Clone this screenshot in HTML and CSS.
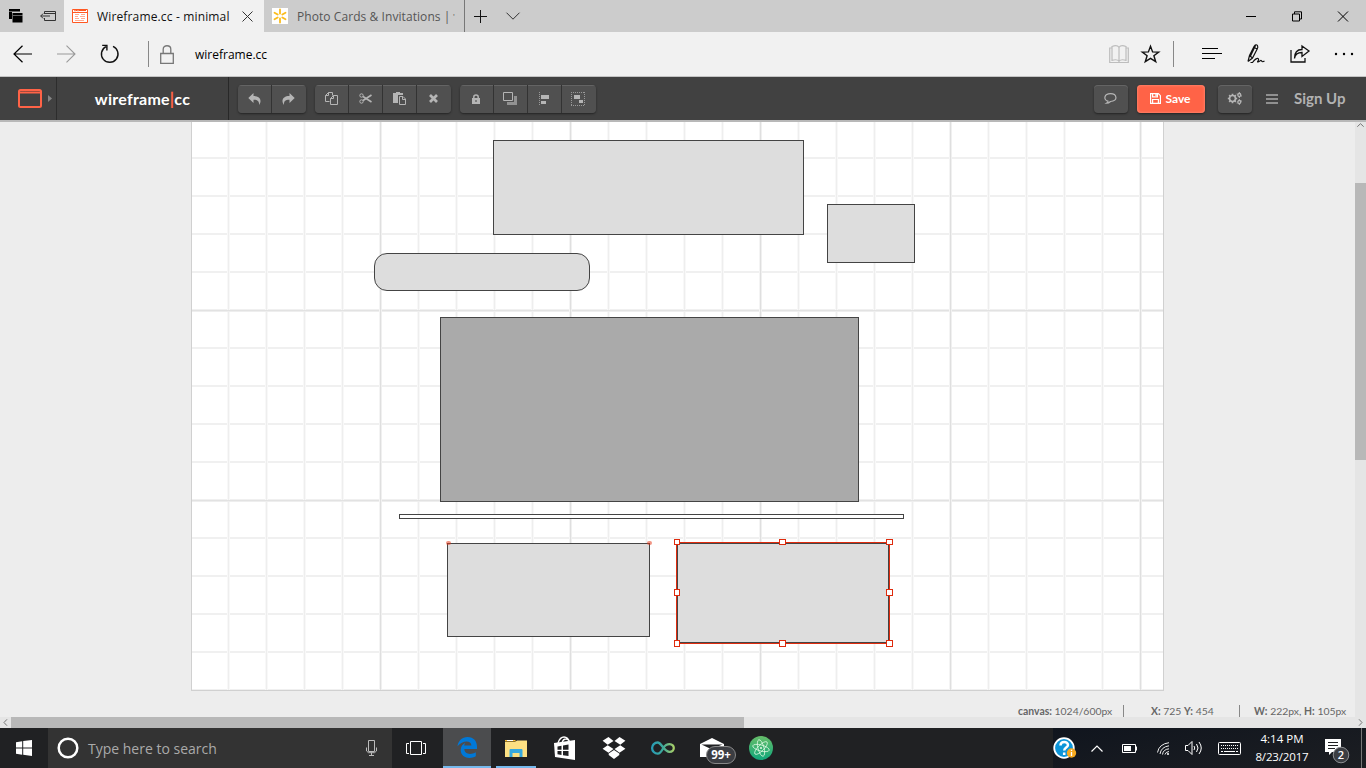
FILE: index.html
```html
<!DOCTYPE html>
<html lang="en">
<head>
<meta charset="utf-8">
<title>Wireframe.cc - minimal</title>
<link rel="stylesheet" href="styles.css">
</head>
<body>
<header class="tabs">
  <div class="tab-tools">
    <svg width="14" height="14" viewBox="0 0 14 14"><path d="M0 0h11v3H3v7H0z"/><path d="M3.5 4h10v9.500h-10z"/><path d="M0 2.500h11M4 6.500h10" stroke="#aaa" stroke-width=".6"/></svg>
    <svg width="16" height="12" viewBox="0 0 16 12" fill="none" stroke="#333"><path d="M4.500 4V1.500h11v9h-11V8M4.500 3.500h11M.7 6H10M3.200 3.500.7 6l2.500 2.500"/></svg>
  </div>
  <div class="tab active">
    <svg width="16" height="14" viewBox="0 0 16 14" fill="none" stroke="#ff5722"><path fill="#fff" d="M.5.500h15v13H.500z"/><path d="M1 3.500h14M2 1.500h12" /><path d="M2 2h2M5 2h2" stroke="#ffc4ad"/><path d="M3 5.500h4M9 5.500h4M3 7.500h3M8 7.500h5M3 9.500h4M9 9.500h4M3 11.500h9" stroke="#ffab91"/></svg>
    <span class="tab-name t-one">Wireframe.cc - minimal</span>
    <svg class="tab-x" width="11" height="11" viewBox="0 0 11 11" stroke="#333"><path d="m.5.500 10 10m0-10-10 10"/></svg>
  </div>
  <div class="tab idle">
    <svg width="16" height="16" viewBox="0 0 16 16"><path fill="#fff" d="M0 0h16v16H0z"/><path d="M8 1.500v4M8 10.500v4M2.500 4.700 5.700 6.600M10.300 9.400l3.200 1.900M2.500 11.300l3.200-1.900M10.300 6.600l3.200-1.900" stroke="#fbbc1c" stroke-width="1.800" stroke-linecap="round"/></svg>
    <span class="tab-name t-two">Photo Cards &amp; Invitations |</span><span class="cut">'</span>
  </div>
  <svg class="plus" width="13" height="13" viewBox="0 0 13 13" stroke="#111"><path d="M6.500 0v13M0 6.500h13"/></svg>
  <svg class="chev" width="14" height="8" viewBox="0 0 14 8" fill="none" stroke="#333"><path d="m.5.700 6.500 6.500L13.500.700"/></svg>
  <div class="win">
    <svg width="10" height="11" viewBox="0 0 10 11" stroke="#000"><path d="M0 5.500h10"/></svg>
    <svg width="10" height="11" viewBox="0 0 10 11" fill="none" stroke="#000"><path d="M.500 3h7v7h-7zM2.500 3V.800h7V8h-2"/></svg>
    <svg width="10" height="11" viewBox="0 0 10 11" stroke="#000"><path d="m0 .500 10 10m0-10-10 10"/></svg>
  </div>
</header>

<nav class="address">
  <svg class="back" width="20" height="18" viewBox="0 0 20 18" fill="none" stroke="#000" stroke-width="1.200"><path d="M19 9H1M9.500.700 1 9l8.500 8.300"/></svg>
  <svg class="fwd" width="20" height="18" viewBox="0 0 20 18" fill="none" stroke="#999" stroke-width="1.100"><path d="M1 9h18M10.500.700 19 9l-8.500 8.300"/></svg>
  <svg class="reload" width="20" height="20" viewBox="0 0 20 20" fill="none" stroke="#111" stroke-width="1.400"><path d="M13 2.400A8.300 8.300 0 1 1 6 2.600M2.200 1.400h4.700v5"/></svg>
  <i class="bar"></i>
  <svg class="lock" width="14" height="19" viewBox="0 0 14 19" fill="none" stroke="#777" stroke-width="1.300"><path d="M.7 8.500h12.600v9.800H.7zM3.200 8.500V4.200c0-4.600 7.600-4.600 7.600 0v4.300"/></svg>
  <span class="url">wireframe.cc</span>
  <div class="edge-tools">
    <svg width="20" height="19" viewBox="0 0 20 19" fill="none" stroke="#bdbdbd" stroke-width="1.200"><path d="M3 1.500q5-2 7 .8 2-2.800 7-.8v13.800q-5-1.400-7 .8-2-2.200-7-.8zM10 2.300v15M3 3H.7v14.500h18.600V3H17"/></svg>
    <svg class="star" width="19" height="18" viewBox="0 0 19 18" fill="none" stroke="#111" stroke-width="1.400"><path d="m9.500 1.200 2.100 5.700 6.100.2-4.800 3.700 1.800 5.900-5.200-3.400-5.200 3.400 1.800-5.900-4.800-3.700 6.100-.2z"/></svg>
    <i class="bar"></i>
    <svg class="hub" width="20" height="12" viewBox="0 0 20 12" stroke="#000" stroke-width="1.100"><path d="M0 .5h16M0 5.500h20M0 10.500h13"/></svg>
    <svg class="pen" width="18" height="20" viewBox="0 0 18 20" fill="none" stroke="#111" stroke-width="1.200"><path d="M1 17.500 2.500 11.500 7 2.500q2-3 3.500-.8.800 1.300-.3 3.300L5.500 14 1 17.500M8.500 1.500 3.500 12M6.500 3l3.500 2M2.500 11.500l3 2.500M3.500 18.500h2c2.500-3.500 5-5 6-3.500s-2 3-.5 3 2.500-2.500 3.500-1.200.8 1.500 3 .2"/></svg>
    <svg class="share" width="20" height="18" viewBox="0 0 20 18" fill="none" stroke="#111" stroke-width="1.300"><path d="M1 5v12h14v-4M4.500 13.500c.5-4 3-6 7.500-6v4L19 6l-7-5v3.500c-5 0-7.500 3-7.500 9z"/></svg>
    <svg class="dots" width="20" height="4" viewBox="0 0 20 4"><circle cx="2" cy="2" r="1.200"/><circle cx="10" cy="2" r="1.200"/><circle cx="18" cy="2" r="1.200"/></svg>
  </div>
</nav>

<div class="toolbar">
  <div class="menu-cell">
    <svg width="24" height="19" viewBox="0 0 24 19" fill="none" stroke="#ff6347" stroke-width="2"><rect x="1" y="1" width="22" height="17" rx="1.500"/><path d="M1 3.500h22" stroke-width="2"/><path d="M3 2.500h1.500M5.500 2.500H7M8 2.500h13" stroke="#a34a3c" stroke-width="1"/></svg>
    <svg class="tri" width="4" height="7" viewBox="0 0 4 7"><path d="m0 0 4 3.500L0 7z" fill="#858585"/></svg>
  </div>
  <div class="brand">wireframe<b>|</b>cc</div>
  <div class="group g-history">
    <button><svg width="13" height="12" viewBox="0 0 13 12"><path d="M5.500 0v3C10 3 12.500 5 12.500 8c0 1.500-.5 2.700-1.500 4 .3-3.500-1-5.200-5.500-5.200V10L.3 5z"/></svg></button>
    <button><svg width="13" height="12" viewBox="0 0 13 12"><path d="M7.500 0v3C3 3 .5 5 .5 8c0 1.500.5 2.700 1.500 4-.3-3.500 1-5.200 5.500-5.200V10l5.200-5z"/></svg></button>
  </div>
  <div class="group">
    <button><svg class="line" width="13" height="13" viewBox="0 0 13 13"><path d="M4.500 9.500h-4v-6l3-3h4v3M.5 3.500h3v-3M5.500 12.500h7v-9h-4l-3 3zM5.500 6.500h3v-3"/></svg></button>
    <button><svg class="line" width="13" height="11" viewBox="0 0 13 11"><circle cx="2.500" cy="2.500" r="1.700"/><circle cx="2.500" cy="8.500" r="1.700"/><path d="m4 3.500 8.500 5.500M4 7.500 12.500 2" stroke-width="1.600"/></svg></button>
    <button><svg width="13" height="13" viewBox="0 0 13 13"><path d="M0 1h3V0h4v1h3v2H5v8H0z"/><path d="M6.500 4.500h3.500l2.500 2.500v5.500h-6zM9.500 4.500v3h3" fill="#4e4e4e" stroke="#b5b5b5"/></svg></button>
    <button><svg width="9" height="9" viewBox="0 0 9 9" stroke="#b5b5b5" stroke-width="2.700"><path d="m1 1 7 7m0-7-7 7"/></svg></button>
  </div>
  <div class="group">
    <button><svg width="8" height="10" viewBox="0 0 8 10"><path d="M0 4h8v6H0z"/><path d="M1.800 5V3c0-2.700 4.400-2.700 4.400 0v2" fill="none" stroke="#b5b5b5" stroke-width="1.500"/><path d="M3.500 6h1v2h-1z" fill="#444"/></svg></button>
    <button><svg width="14" height="13" viewBox="0 0 14 13"><path d="M11 4h3v9H4v-3h7z" fill="#929292"/><path d="M.5.500h9v8h-9z" fill="none" stroke="#b5b5b5"/></svg></button>
    <button><svg width="11" height="14" viewBox="0 0 11 14"><path d="M.5 0v14" stroke="#999" stroke-dasharray="1 1"/><path d="M2 3h8v4H2zM2 9h5v3H2z"/></svg></button>
    <button><svg width="14" height="14" viewBox="0 0 14 14"><path d="M0 .5h14M0 13.500h14M.5 0v14M13.500 0v14" fill="none" stroke="#999" stroke-dasharray="1 1"/><path d="M3 3h6v4H3zM8 8h4v3H8z"/></svg></button>
  </div>
  <div class="right-tools">
    <button class="solo"><svg class="line" width="13" height="11" viewBox="0 0 13 11"><path d="M4 8.200C-1 7 0 .7 6.500.7s8 7.500 0 7.800Q4.800 10.200 2.500 10.200 4 9.300 4 8.200z" stroke-width="1.200"/></svg></button>
    <button class="save"><svg width="11" height="11" viewBox="0 0 11 11" fill="none" stroke="#fff" stroke-width="1.200"><path d="M.6.600h7.700l2.100 2.100v7.700H.6zM2.600.6v3.200h4.800V.6M2.600 10V6.500h5.800V10M6 1v2"/></svg>Save</button>
    <button class="solo cog"><svg class="line" width="14" height="13" viewBox="0 0 14 13"><circle cx="4.500" cy="6.500" r="3" stroke-width="1.700"/><path d="M4.500 1.700v1.500M4.500 9.800v1.500M-.2 6.500h1.500M7.700 6.500h1.500M1.200 3.200l1 1M6.800 8.800l1 1M7.800 3.200l-1 1M2.200 8.800l-1 1" stroke-width="1.700"/><circle cx="11.300" cy="3" r="1.500" stroke-width="1.300"/><circle cx="11.300" cy="10" r="1.500" stroke-width="1.300"/><path d="M11.300 0v1M11.300 5v1M11.300 7v1M11.300 12v1M8.700 2h.8M13 4h.8M8.700 11h.8M13 9h.8"/></svg></button>
    <svg class="burger" width="12" height="10" viewBox="0 0 12 10" stroke="#aaa" stroke-width="1.500"><path d="M0 1h12M0 5h12M0 9h12"/></svg>
    <span class="signup">Sign Up</span>
  </div>
</div>

<main class="work">
  <div class="stage">
    <div class="paper"></div>
    <div class="shape hero"></div>
    <div class="shape side"></div>
    <div class="shape pill"></div>
    <div class="shape dark"></div>
    <div class="shape rule"></div>
    <div class="shape card"><i></i><i></i></div>
    <div class="shape picked"><i class="h nw"></i><i class="h n"></i><i class="h ne"></i><i class="h w"></i><i class="h e"></i><i class="h sw"></i><i class="h s"></i><i class="h se"></i></div>
    <div class="status"><span class="s-canvas"><b>canvas:</b> 1024/600px</span><i></i><span class="s-pos"><b>X:</b> 725 <b>Y:</b> 454</span><i></i><span class="s-size"><b>W:</b> 222px, <b>H:</b> 105px</span></div>
  </div>
  <div class="vscroll"><svg width="7" height="4" viewBox="0 0 7 4" fill="none" stroke="#777"><path d="m.3 3.700 3.200-3 3.200 3"/></svg><i></i></div>
</main>
<div class="hscroll"><svg width="5" height="7" viewBox="0 0 5 7" fill="none" stroke="#777"><path d="M4 .3 1 3.500l3 3.200"/></svg><i></i><svg class="hr" width="5" height="7" viewBox="0 0 5 7" fill="none" stroke="#777"><path d="m1 .3 3 3.200-3 3.200"/></svg></div>

<footer class="taskbar">
  <div class="start"><svg width="16" height="16" viewBox="0 0 16 16" fill="#fff"><path d="M0 2.200 6.200 1.300v6.200H0zM7.200 1.100 16 0v7.500H7.200zM0 8.500h6.200v6.200L0 13.800zM7.200 8.500H16V16l-8.800-1.200z"/></svg></div>
  <div class="search">
    <svg width="22" height="22" viewBox="0 0 22 22" fill="none" stroke="#fff" stroke-width="2.500"><circle cx="11" cy="11" r="9.300"/></svg>
    <span>Type here to search</span>
    <svg class="mic" width="11" height="16" viewBox="0 0 11 16" fill="none" stroke="#bbb"><path d="M2.500.500h6v11h-6zM.500 7.500v3.500l2 1.700h6l2-1.700V7.500M5.500 12.500v3M3 15.500h5"/></svg>
  </div>
  <div class="app view"><svg width="20" height="15" viewBox="0 0 20 15" fill="none" stroke="#fff"><path d="M4.500.500h11v13h-11zM3 2.500H.500v10H3M17 2.500h2.500v10H17"/></svg></div>
  <div class="app edge"><svg width="21" height="21" viewBox="0 0 21 21"><path fill="#0078d7" d="M.5 9.200C1.300 3.800 5 0 10.500 0 16.700 0 20 4.300 20 9.800V12H7.300c.2 5.600 7 6 11.500 3.200v4.100C12.500 22.800 3.700 20.700 3.700 13c0-3.400 1.900-6 4.800-7.300C7.600 6.800 7.300 7.700 7.200 8.600h7.200C14.300 2.500 5 3.500.5 9.200z"/></svg></div>
  <div class="app files"><svg width="22" height="19" viewBox="0 0 22 19"><path fill="#f5bd32" d="M0 1h10l1.500 1.500H0z"/><path fill="#fce083" d="M0 3h10l2-1.500h10V18H0z"/><path fill="#fff" d="M2 1h6v1H2z"/><path fill="#36a9df" d="M4.500 18v-7q0-1 1-1h11q1 0 1 1v7h-3v-4h-7v4z"/></svg></div>
  <div class="app"><svg width="22" height="24" viewBox="0 0 22 24"><path d="M4 7q2-6 6-6t6 6M8 7q1-4 4-4t4 4" fill="none" stroke="#fff" stroke-width="1.300"/><path fill="#fff" d="M0 7l21-3v20L1 21z"/><path fill="#202123" d="m3.500 10.500 4-.7v4h-4zM9 9.500l5.500-1v5.200H9zM3.500 15h4v4l-4-.7zM9 15h5.500v5L9 19.200z"/></svg></div>
  <div class="app"><svg width="24" height="22" viewBox="0 0 24 22" fill="#fff"><path d="m6.500 0 5 4-5.800 3.700L.6 3.800zM17.500 0l-5 4 5.800 3.700 5.100-3.900zM5.700 8.200l5.800 3.900-5 3.600-5.900-3.900zM18.300 8.200l-5.800 3.900 5 3.600 5.900-3.900zM6.700 16.600l5.300-3.700 5.300 3.700v1.500L12 22l-5.300-3.900z"/></svg></div>
  <div class="app"><svg width="24" height="14" viewBox="0 0 24 14" fill="none" stroke-width="2.300"><defs><linearGradient id="inf"><stop stop-color="#299db5"/><stop offset=".5" stop-color="#3da99a"/><stop offset="1" stop-color="#a8cf68"/></linearGradient></defs><path stroke="url(#inf)" d="M12.300 7C10.500 10.500 9 12.700 6.700 12.700a5.600 5.600 0 0 1 0-11.200C10.500 1.500 13 10.800 18.500 10.800c5.700 0 5.700-7.600 0-7.600-3 0-4.700 1.500-6.200 3.800"/></svg></div>
  <div class="app mail"><svg width="24" height="20" viewBox="0 0 24 20"><path fill="#fff" d="M0 6 12 0l12 6v13H0z"/><path fill="#202123" d="m1.500 6.500 21 0L14 10l-3 1z"/></svg><span>99+</span></div>
  <div class="app"><svg width="24" height="24" viewBox="0 0 24 24" fill="none"><defs><linearGradient id="atom" x2="0" y2="1"><stop stop-color="#66bd69"/><stop offset="1" stop-color="#11a77b"/></linearGradient></defs><circle cx="12" cy="12" r="12" fill="url(#atom)"/><g stroke="#d9f7df" stroke-width=".8"><ellipse cx="12" cy="12" rx="8.500" ry="3" transform="rotate(15 12 12)"/><ellipse cx="12" cy="12" rx="8.500" ry="3" transform="rotate(75 12 12)"/><ellipse cx="12" cy="12" rx="8.500" ry="3" transform="rotate(135 12 12)"/></g><circle cx="12" cy="12" r="1.100" fill="#d9f7df"/></svg></div>
  <div class="tray">
    <svg width="24" height="22" viewBox="0 0 24 22"><circle cx="11" cy="11" r="9.800" fill="#0d95d8" stroke="#fff" stroke-width="1.800"/><path d="M7.500 8.500c0-5 7.500-4.500 7.500-.5 0 2.500-3.800 2.700-3.800 5.500M11.200 15.500V18" fill="none" stroke="#fff" stroke-width="2.500"/><circle cx="18.500" cy="16" r="4.700" fill="#f7aa20"/><path d="M18.500 15v4M18.500 12.700v1.300" stroke="#fff" stroke-width="1.300"/></svg>
    <svg class="up" width="12" height="7" viewBox="0 0 12 7" fill="none" stroke="#fff" stroke-width="1.200"><path d="m.5 6.500 5.500-5.500 5.500 5.500"/></svg>
    <svg class="bat" width="16" height="9" viewBox="0 0 16 9"><path d="M.5.500h13v8H.500zM14.500 2.500v4" fill="none" stroke="#fff"/><path fill="#fff" d="M2 2h7v5H2z"/></svg>
    <svg class="wifi" width="13" height="13" viewBox="0 0 13 13" fill="none" stroke="#eee"><path d="M.5 10.500Q2 2 12 .7M3 12Q4 5 12 3.800M5.500 12.500Q6 7.500 12 6.800M8 12.500Q8.500 10 12 9.500"/><circle cx="11" cy="12" r="1" fill="#fff" stroke="none"/></svg>
    <svg class="vol" width="17" height="14" viewBox="0 0 17 14" fill="none" stroke="#fff"><path d="M.5 4.500H3l4-4v13l-4-4H.5zM9 5q1.500 2 0 4M11.500 3q3 4 0 8M14 1q4.500 6 0 12"/></svg>
    <svg class="kbd" width="23" height="13" viewBox="0 0 23 13" fill="none" stroke="#fff"><rect x=".5" y=".5" width="22" height="12" rx="1"/><path d="M3 3.500h17M3 6.500h17" stroke-dasharray="1 1"/><path d="M3 9.500h2M6 9.500h11M18 9.500h2"/></svg>
    <div class="clock"><span>4:14 PM</span><span class="date">8/23/2017</span></div>
    <div class="notice"><svg width="24" height="25" viewBox="0 0 24 25"><path fill="#fff" d="M0 0h16v13H7l-3 3v-3H0z"/><path d="M3 3.500h10M3 6.500h10M3 9.500h7" stroke="#202123"/><circle cx="16" cy="16" r="7.800" fill="#3b3d42" stroke="#8d8f92"/><text x="16" y="20" text-anchor="middle">2</text></svg></div>
    <i class="desk"></i>
  </div>
</footer>
</body>
</html>
```
FILE: styles.css
```css
* { box-sizing: border-box; }
body { margin: 0; width: 1366px; height: 768px; overflow: hidden; display: flex; flex-direction: column; font: 12px "Open Sans", "Noto Sans", sans-serif; color: #111; }
svg { display: block; flex: none; overflow: visible; }
i { font-style: normal; }

.tabs { height: 32px; flex: none; background: #ccc; display: flex; align-items: center; }
.tab-tools { width: 64px; padding-left: 9px; display: flex; align-items: center; gap: 17px; }
.tab { width: 200px; height: 32px; display: flex; align-items: center; padding-left: 8px; white-space: nowrap; }
.active { background: #f1f1f1; }
.idle { width: 201px; color: #555; border-right: 1px solid #777; }
.tab-name { margin-left: 9px; }
.t-one { width: 133px; letter-spacing: .15px; }
.t-two { width: 154px; letter-spacing: .07px; }
.cut { margin-left: 2px; font-size: 8px; line-height: 12px; }
.tab-x { margin-left: 12px; }
.plus { margin-left: 9px; }
.chev { margin-left: 19px; }
.win { margin-left: auto; padding-right: 18px; display: flex; gap: 36px; }

.address { height: 45px; flex: none; background: #f1f1f1; border-bottom: 1px solid #c4c4c4; display: flex; align-items: center; }
.back { margin-left: 13px; }
.fwd { margin-left: 23px; }
.reload { margin-left: 24px; }
.bar { width: 1px; height: 26px; background: #888; }
.address > .bar { margin-left: 28px; }
.lock { margin-left: 11px; }
.url { margin-left: 21px; color: #000; }
.edge-tools { margin-left: auto; padding-right: 12px; display: flex; align-items: center; }
.star { margin-left: 12px; }
.edge-tools .bar { margin-left: 13px; }
.hub { margin-left: 28px; }
.pen { margin-left: 25px; }
.share { margin-left: 25px; }
.dots { margin-left: 24px; }

.toolbar { height: 43px; flex: none; background: #414141; display: flex; align-items: center; font-family: Lato, sans-serif; }
.menu-cell { width: 57px; height: 43px; display: flex; align-items: center; padding-left: 18px; border-right: 1px solid #2d2d2d; }
.tri { margin-left: 6px; }
.brand { width: 172px; height: 43px; line-height: 44px; text-align: center; color: #fff; font-size: 16px; letter-spacing: .25px; font-weight: 700; border-right: 1px solid #282828; }
.brand b { color: #ff6347; }
button { width: 34px; height: 28px; padding: 0 1px 0 0; margin: 0; border: 0; border-right: 1px solid #333; background: #505050; display: flex; align-items: center; justify-content: center; font: inherit; box-shadow: inset 0 1px #646464; }
button svg { fill: #b5b5b5; }
button .line { fill: none; stroke: #b5b5b5; }
.group { display: flex; margin-left: 9px; border-radius: 4px; overflow: hidden; box-shadow: 0 1px 2px #242424; }
.group button:last-child { border-right: 0; padding-right: 2px; }
.solo, .save { border: 0; border-radius: 4px; box-shadow: inset 0 1px #646464, 0 1px 2px #242424; }
.right-tools { margin-left: auto; display: flex; align-items: center; padding-right: 20px; }
.save { width: 68px; margin-left: 9px; background: #ff6347; color: #fff; font-weight: 700; font-size: 12px; gap: 4px; box-shadow: inset 0 0 3px #ff9a85, 0 1px 2px #242424; }
.save svg { fill: none; }
.cog { margin-left: 13px; }
.burger { margin-left: 14px; }
.signup { margin-left: 16px; width: 52px; margin-top: -2px; white-space: nowrap; color: #b2b2b2; font-weight: 700; font-size: 15px; }

.work { height: 594px; flex: none; display: flex; border-top: 2px solid #b8b8b8; margin-top: 0; }
.stage { position: relative; width: 1355px; height: 595px; background: #ededed; }
.work { height: 596px; }
.paper { margin-left: 191px; width: 973px; height: 569px; border: 1px solid #d0d0d0; border-top: 0;
  background:
    linear-gradient(90deg, #f4f4f4 1px, #dfdfdf 1px 2px, #f0f0f0 2px 3px, transparent 3px) -3px 0 / 190px 100%,
    linear-gradient(#e2e2e2 1px, #eee 1px 2px, transparent 2px) 0 -2px / 100% 190px,
    linear-gradient(90deg, #f8f8f8 1px, #eee 1px 2px, #f8f8f8 2px 3px, transparent 3px) -3px 0 / 38px 100%,
    linear-gradient(#f0f0f0 2px, transparent 2px) 0 -3px / 100% 38px, #fff; }
.shape { position: absolute; background: #ddd; border: 1px solid #444; }
.hero { left: 493px; top: 18px; width: 311px; height: 95px; }
.side { left: 827px; top: 82px; width: 88px; height: 59px; }
.pill { left: 374px; top: 131px; width: 216px; height: 38px; border-radius: 13px; }
.dark { left: 440px; top: 195px; width: 419px; height: 185px; background: #aaa; }
.rule { left: 399px; top: 392px; width: 505px; height: 5px; background: #fff; }
.card { left: 447px; top: 421px; width: 203px; height: 94px; }
.card i { position: absolute; left: -2px; top: -3px; width: 5px; height: 4px; background: #e4381888; border-radius: 2px; }
.card i + i { left: 199px; }
.picked { left: 677px; top: 421px; width: 212px; height: 100px; box-shadow: 0 0 0 1px #df2b0d; }
.h { position: absolute; width: 7px; height: 7px; margin: -4px; border: 1px solid #df2b0d; background: #fff; }
.nw, .w, .sw { width: 6px; }
.nw, .n, .ne { height: 6px; }
.nw { left: 0; top: -1px; } .n { left: 105px; top: -1px; } .ne { left: 212px; top: -1px; }
.w { left: 0; top: 49px; } .e { left: 212px; top: 49px; }
.sw { left: 0; top: 100px; } .s { left: 105px; top: 100px; } .se { left: 212px; top: 100px; }
.status { position: absolute; right: 10px; bottom: 0; height: 12px; display: flex; align-items: center; font: 10.400px/12px Lato, sans-serif; color: #666; white-space: nowrap; }
.status i { width: 1px; height: 12px; background: #888; }
.status b { font-weight: 700; }
.s-canvas { width: 105px; } .s-pos { width: 88px; margin-left: 27px; } .s-size { width: 91px; margin-left: 14px; }
.vscroll { width: 11px; background: #e5e5e5; }
.vscroll svg { margin: 1px 2px 56px; }
.vscroll i { display: block; height: 277px; background: #b8b8b8; }
.hscroll { height: 11px; flex: none; background: #e5e5e5; display: flex; align-items: center; padding: 0 3px; }
.hscroll i { width: 733px; height: 11px; margin-left: 3px; background: #b8b8b8; }
.hr { margin-left: auto; }
.work { height: 597px; }

.taskbar { height: 40px; flex: none; background: #202123; display: flex; color: #fff; }
.start { width: 48px; display: flex; align-items: center; justify-content: center; }
.search { width: 344px; background: #333; display: flex; align-items: center; padding: 0 15px 0 9px; color: #aaa; font-size: 14px; }
.search span { margin-left: 9px; white-space: nowrap; }
.mic { margin-left: auto; }
.app { width: 49px; display: flex; align-items: center; justify-content: center; position: relative; }
.view { padding-right: 2px; }
.app.edge { width: 48px; margin-left: 2px; background: #4b4c4e; border-bottom: 2px solid #76b9ed; padding-top: 1px; }
.app.files::after { content: ""; position: absolute; left: 5px; right: 4px; bottom: 0; height: 2px; background: #76b9ed; }
.mail span { position: absolute; left: 19px; top: 18px; width: 30px; height: 18px; border: 1px solid #888; border-radius: 9px; background: #3b3d42; font: 700 11.500px/16px "Open Sans", sans-serif; text-align: center; }
.tray { margin-left: auto; display: flex; align-items: center; background: linear-gradient(170deg, #10151e, #1c1e22); }
.up { margin-left: 14px; } .bat { margin-left: 19px; } .wifi { margin-left: 19px; } .vol { margin-left: 15px; } .kbd { margin-left: 16px; }
.clock { width: 56px; margin-left: 13px; margin-top: -1px; display: flex; flex-direction: column; align-items: center; font-size: 11.500px; line-height: 18px; white-space: nowrap; }
.date { letter-spacing: -.15px; }
.notice { margin-left: 15px; padding-top: 6px; }
.notice text { fill: #fff; font: 600 11px "Open Sans", sans-serif; }
.desk { width: 1px; height: 40px; background: #777; margin: 0 4px 0 12px; }
```
